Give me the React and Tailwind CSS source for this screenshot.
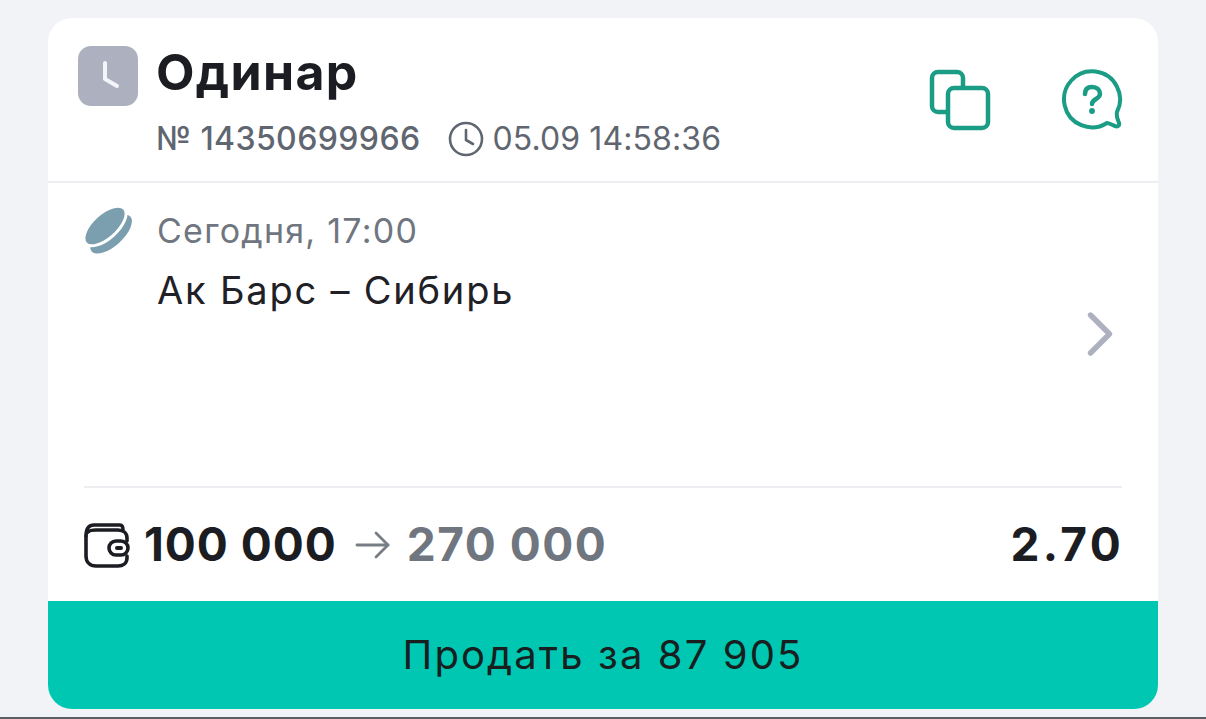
import React from "react";
import { ChevronRight } from "lucide-react";

const font = { fontFamily: '"Inter", "Noto Sans", sans-serif' };

function BetTypeIcon() {
  return (
    <div className="w-[60px] h-[60px] rounded-[13px] bg-[#adb0bf] flex items-center justify-center shrink-0">
      <svg width="60" height="60" viewBox="0 0 60 60" fill="none">
        <path d="M27 17 V33 L39 40" stroke="#f4f5f8" strokeWidth="4" strokeLinecap="round" strokeLinejoin="round" />
      </svg>
    </div>
  );
}

function CopyIcon() {
  return (
    <svg width="62" height="62" viewBox="0 0 62 62" fill="none" stroke="#1b9c85" strokeWidth="4.5" strokeLinejoin="round">
      <path d="M19 43 H9 a6 6 0 0 1 -6 -6 V9 a6 6 0 0 1 6 -6 H28 a6 6 0 0 1 6 6 V19" />
      <rect x="19" y="19" width="40" height="40" rx="6" />
    </svg>
  );
}

function HelpIcon() {
  return (
    <svg width="62" height="62" viewBox="0 0 62 62" fill="none" stroke="#1b9c85" strokeLinecap="round" strokeLinejoin="round">
      <path d="M46 54 A28 28 0 1 1 56 43 C55 48 57 51 58 54 C59 57 56 58 54 57 C51 56 48 54 46 54 Z" strokeWidth="4" />
      <path d="M24 25 C24 20 27 18 31 18 C36 18 39 21 39 25 C39 30 31 30 31 35" strokeWidth="4.5" />
      <circle cx="31" cy="42" r="2.2" fill="#1b9c85" strokeWidth="1.5" />
    </svg>
  );
}

function SmallClock() {
  return (
    <svg width="36" height="36" viewBox="0 0 36 36" fill="none" stroke="#5f6670" strokeWidth="2.6" strokeLinecap="round" strokeLinejoin="round">
      <circle cx="18" cy="18" r="16" />
      <path d="M18 9 V19 L25 23" />
    </svg>
  );
}

// Top face is stroked white so a thin gap shows against the side band
function PuckIcon() {
  return (
    <svg width="50" height="48" viewBox="0 0 50 48">
      <ellipse cx="27" cy="28" rx="26" ry="12" transform="rotate(-42 27 28)" fill="#7c9fb0" />
      <ellipse cx="21" cy="20" rx="26" ry="12.5" transform="rotate(-42 21 20)" fill="#7c9fb0" stroke="#ffffff" strokeWidth="3" />
    </svg>
  );
}

function WalletIcon() {
  return (
    <svg width="46" height="46" viewBox="0 0 46 46" fill="none" stroke="#1b1d22" strokeWidth="3.6" strokeLinecap="round" strokeLinejoin="round">
      <path d="M2 14 C2 6 5 3 10 3 H36 C38 3 39 5 39 8" />
      <path d="M2 14 V34 C2 40 6 44 12 44 H34 C39 44 43 41 43 36 V34" />
      <path d="M4 10 C6 8 9 8 12 8 H34 C39 8 43 11 43 16 V19" />
      <rect x="25" y="19" width="19" height="14" rx="7" />
      <path d="M33 26 H37" strokeWidth="4" />
    </svg>
  );
}

function ThinArrow() {
  return (
    <svg width="36" height="30" viewBox="0 0 36 30" fill="none" stroke="#777d85" strokeWidth="2.8" strokeLinecap="round" strokeLinejoin="round">
      <path d="M2 15 H33" />
      <path d="M21 3 L33 15 L21 27" />
    </svg>
  );
}

export default function App() {
  return (
    <div className="w-[1206px] h-[719px] overflow-hidden bg-[#f2f3f6] flex flex-col" style={font}>
      <div className="flex-1 pt-[18px] px-[48px]">
        <div className="w-[1110px] h-[691px] rounded-[24px] bg-white overflow-hidden flex flex-col">
          {/* Header */}
          <div className="h-[165px] shrink-0 border-b-2 border-[#eceef1] pl-[30px] pr-[35px] pt-[28px] flex justify-between">
            <div className="flex gap-[18px]">
              <BetTypeIcon />
              <div className="flex flex-col">
                <div className="text-[50px] leading-[52px] font-bold text-[#1b1d22] tracking-[1.3px]">Одинар</div>
                <div className="mt-[23px] flex items-center text-[32px] leading-[36px] text-[#5f6670]">
                  <span className="font-medium tracking-[0.4px]">№ 14350699966</span>
                  <span className="ml-[27px] mr-[9px]"><SmallClock /></span>
                  <span className="tracking-[0.1px]">05.09 14:58:36</span>
                </div>
              </div>
            </div>
            <div className="flex gap-[70px] pt-[23px]">
              <CopyIcon />
              <HelpIcon />
            </div>
          </div>

          {/* Event */}
          <div className="h-[303px] shrink-0 pl-[36px] pr-[35px] flex">
            <div className="pt-[23px] w-[73px] shrink-0"><PuckIcon /></div>
            <div className="flex-1 pt-[28px]">
              <div className="text-[34px] leading-[40px] text-[#70767f] tracking-[1.25px]">Сегодня, 17:00</div>
              <div className="mt-[18px] text-[38px] leading-[42px] text-[#1f2126] tracking-[1.8px]">Ак Барс – Сибирь</div>
            </div>
            <div className="flex items-center pb-[2px] -mr-[15px]">
              <ChevronRight size={76} color="#adb0bf" strokeWidth={1.7} />
            </div>
          </div>

          {/* Sum and coefficient */}
          <div className="mx-[36px] h-[115px] shrink-0 border-t-2 border-[#eceef1] flex items-center justify-between">
            <div className="flex items-center">
              <WalletIcon />
              <span className="ml-[14px] text-[46px] font-bold text-[#1b1d22] tracking-[1px]">100 000</span>
              <span className="ml-[18px] mr-[16px]"><ThinArrow /></span>
              <span className="text-[46px] font-bold text-[#70767f] tracking-[1.5px]">270 000</span>
            </div>
            <span className="text-[46px] font-bold text-[#1b1d22] tracking-[3.3px] -mr-[2px]">2.70</span>
          </div>

          {/* Sell button */}
          <div className="flex-1 bg-[#00c7b1] flex items-center justify-center text-[40px] text-[#17201f] tracking-[2.1px]">
            Продать за 87 905
          </div>
        </div>
      </div>
      <div className="h-[2px] shrink-0 bg-[#5c5f63]" />
    </div>
  );
}
